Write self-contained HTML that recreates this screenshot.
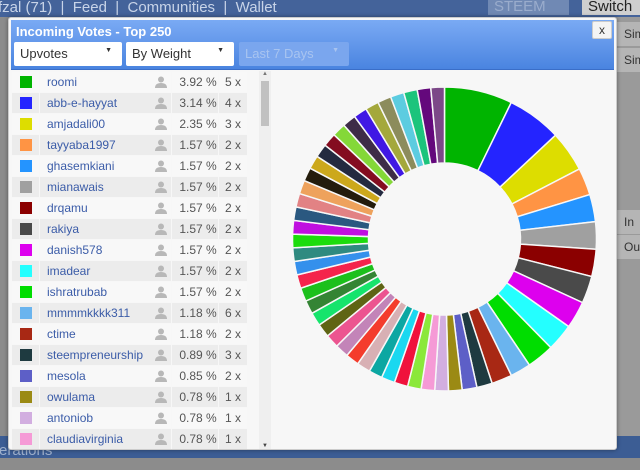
<!DOCTYPE html>
<html><head><meta charset="utf-8"><style>
*{box-sizing:border-box;margin:0;padding:0}
body{width:640px;height:470px;overflow:hidden;position:relative;background:#8c8c8c;font-family:"Liberation Sans",sans-serif;font-size:12px}
.top{position:absolute;left:0;top:0;width:640px;height:17px;background:#44639a;color:#c8d4e8;font-size:15px;line-height:10px;padding-left:0}
.top span{position:absolute;top:0}
.bot{position:absolute;left:0;top:436px;width:640px;height:22px;background:#3c5d94;color:#9eb0cc;font-size:15px}
.right{position:absolute;left:616px;top:17px;width:24px;height:419px;background:#9a9a9a}
.rrow{position:absolute;left:616px;width:24px;height:24px;background:#b5b5b5;color:#333;font-size:12px;padding-left:8px;line-height:24px}
.modal{position:absolute;left:8px;top:17px;width:609px;height:433px;background:#f7f7f7;border:1px solid #ccc;border-radius:3px;box-shadow:0 0 4px rgba(0,0,0,.4)}
.hdr{position:absolute;left:2px;top:2px;width:603px;height:50px;background:linear-gradient(#7aaaf4,#4a84e0);border-bottom:1px solid #3a6ec8}
.title{position:absolute;left:5px;top:4px;color:#fff;font-size:13px;font-weight:bold}
.sel{position:absolute;top:22px;height:24px;background:#fff;border-radius:2px;font-size:13px;color:#333;padding:4px 6px}
.sel i{position:absolute;right:10px;top:5px;font-style:normal;font-size:7px}
.x{position:absolute;left:583px;top:3px;width:20px;height:18px;background:#f4f4f4;border:1px solid #ccc;border-radius:2px;text-align:center;font-size:12px;line-height:16px;color:#333}
table{position:absolute;left:2px;top:53px;border-collapse:separate;border-spacing:1px}
td{height:20px;font-size:12px;color:#555}
tr:nth-child(even) td{background:#ececec}
tr:nth-child(odd) td{background:#f8f8f8}
.c1{width:27px;text-align:center}
.c1 div{width:12px;height:12px;margin:auto}
.c2{width:131px;color:#3b5ca8;padding-left:7px;position:relative}
.c3{width:46px;text-align:center;padding-left:6px}
.c4{width:28px;text-align:center}
.sb{position:absolute;left:250px;top:53px;width:12px;height:378px;background:#efefef}
.th{position:absolute;left:2px;top:10px;width:8px;height:45px;background:#c1c1c1}
.p{position:absolute;right:4px;top:4px;width:12px;height:12px}
</style></head><body>
<div class="top"><span style="left:-2px;top:3px">fzal (71) &nbsp;|&nbsp; Feed &nbsp;|&nbsp; Communities &nbsp;|&nbsp; Wallet</span>
<span style="left:488px;top:-2px;width:81px;height:17px;background:#7089b4;color:#9aaccc;padding:4px 6px">STEEM</span>
<span style="left:582px;top:-2px;width:58px;height:17px;background:#cfcfcf;color:#222;padding:4px 6px">Switch</span></div>
<div class="right"></div>
<div class="rrow" style="top:22px">Sim</div>
<div class="rrow" style="top:48px">Sim</div>
<div class="rrow" style="top:210px">In</div>
<div class="rrow" style="top:235px">Ou</div>
<div class="bot"><span style="position:absolute;left:-1px;top:7px;line-height:15px">erations</span></div>
<div class="modal">
<div class="hdr"><div class="title">Incoming Votes - Top 250</div>
<div class="sel" style="left:3px;width:108px">Upvotes<i>▼</i></div>
<div class="sel" style="left:115px;width:108px">By Weight<i>▼</i></div>
<div class="sel" style="left:228px;width:110px;background:#7aa6ee;color:#a8c4f0">Last 7 Days<i>▼</i></div></div>
<div class="x">x</div>
<table id="t"></table>
<div class="sb"><div class="th"></div><div style="position:absolute;left:3px;top:0;font-size:6px;color:#777">▲</div><div style="position:absolute;left:3px;bottom:0;font-size:6px;color:#444">▼</div></div>
<svg style="position:absolute;left:0;top:0" width="609" height="433" id="s"></svg>
</div>
<script>
var rows=[["#00b400","roomi","3.92 %","5 x"],["#2424ff","abb-e-hayyat","3.14 %","4 x"],["#dddd00","amjadali00","2.35 %","3 x"],["#ff9444","tayyaba1997","1.57 %","2 x"],["#2494ff","ghasemkiani","1.57 %","2 x"],["#a0a0a0","mianawais","1.57 %","2 x"],["#8b0000","drqamu","1.57 %","2 x"],["#4a4a4a","rakiya","1.57 %","2 x"],["#dd00ee","danish578","1.57 %","2 x"],["#24ffff","imadear","1.57 %","2 x"],["#00dd00","ishratrubab","1.57 %","2 x"],["#6ab4ee","mmmmkkkk311","1.18 %","6 x"],["#a82814","ctime","1.18 %","2 x"],["#1e3a40","steempreneurship","0.89 %","3 x"],["#5d5fc7","mesola","0.85 %","2 x"],["#9b8a14","owulama","0.78 %","1 x"],["#d2aee0","antoniob","0.78 %","1 x"],["#f59ad6","claudiavirginia","0.78 %","1 x"]];
var ic='<svg class="p" viewBox="0 0 12 12"><circle cx="6" cy="3.5" r="3" fill="#b8b8b8"/><path d="M0 12 Q0 7 6 7 Q12 7 12 12Z" fill="#b8b8b8"/></svg>';
var h='';rows.forEach(function(r){h+='<tr><td class="c1"><div style="background:'+r[0]+'"></div></td><td class="c2">'+r[1]+ic+'</td><td class="c3">'+r[2]+'</td><td class="c4">'+r[3]+'</td></tr>'});
document.getElementById('t').innerHTML=h;
var vals=[3.92,3.14,2.35,1.57,1.57,1.57,1.57,1.57,1.57,1.57,1.57,1.18,1.18,0.89,0.85];
var cols=rows.slice(0,15).map(function(r){return r[0]});
var small=["#9b8a14","#d2aee0","#f59ad6","#8be83a","#f0123c","#1ad8f0","#0ca7a2","#d8b0b4","#f43c2c","#c384b8","#ec5490","#5f6414","#16e46c","#348434","#1cc01c","#f4244c","#3490ec","#2f8a80","#1cdc0c","#c010e0","#2a5880","#e28284","#eea25c","#241c0c","#cca81c","#242a40","#840c20","#84d838","#3e2c48","#4018e4","#a4a83c","#8c8c5c","#5ccce0","#1cc47c","#64087c","#7c4888"];
small.forEach(function(c){vals.push(0.78);cols.push(c)});
var tot=vals.reduce(function(a,b){return a+b},0);
var cx=435.5,cy=221,R=152,r=76,a=0,s='';
function pt(rad,ang){return (cx+rad*Math.sin(ang)).toFixed(2)+' '+(cy-rad*Math.cos(ang)).toFixed(2)}
vals.forEach(function(v,i){var b=a+v/tot*2*Math.PI;var l=(b-a)>Math.PI?1:0;
s+='<path d="M'+pt(R,a)+' A'+R+' '+R+' 0 '+l+' 1 '+pt(R,b)+' L'+pt(r,b)+' A'+r+' '+r+' 0 '+l+' 0 '+pt(r,a)+'Z" fill="'+cols[i]+'" stroke="#f7f7f7" stroke-width="1.5"/>';a=b});
document.getElementById('s').innerHTML=s;
</script>
</body></html>
